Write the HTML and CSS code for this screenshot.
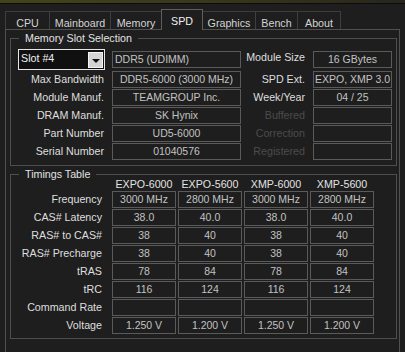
FILE: index.html
```html
<!DOCTYPE html>
<html lang="en">
<head>
    <meta charset="UTF-8">
    <title>CPU-Z SPD</title>
    <link rel="stylesheet" href="styles.css">
</head>
<body>
    <div class="titlebar"></div>
    <div class="tabs">
        <div class="tab">CPU</div>
        <div class="tab">Mainboard</div>
        <div class="tab">Memory</div>
        <div class="tab active">SPD</div>
        <div class="tab">Graphics</div>
        <div class="tab">Bench</div>
        <div class="tab">About</div>
    </div>
    <div class="panel">
        <fieldset class="group slot-group">
            <legend>Memory Slot Selection</legend>
            <div class="slot-grid">
                <div class="slot-select"><span>Slot #4</span><span class="drop-btn"></span></div>
                <div class="box left-text">DDR5 (UDIMM)</div>
                <div class="label right-label">Module Size</div>
                <div class="box">16 GBytes</div>

                <div class="label">Max Bandwidth</div>
                <div class="box">DDR5-6000 (3000 MHz)</div>
                <div class="label right-label">SPD Ext.</div>
                <div class="box">EXPO, XMP 3.0</div>

                <div class="label">Module Manuf.</div>
                <div class="box">TEAMGROUP Inc.</div>
                <div class="label right-label">Week/Year</div>
                <div class="box">04 / 25</div>

                <div class="label">DRAM Manuf.</div>
                <div class="box">SK Hynix</div>
                <div class="label right-label disabled">Buffered</div>
                <div class="box"></div>

                <div class="label">Part Number</div>
                <div class="box">UD5-6000</div>
                <div class="label right-label disabled">Correction</div>
                <div class="box"></div>

                <div class="label">Serial Number</div>
                <div class="box">01040576</div>
                <div class="label right-label disabled">Registered</div>
                <div class="box"></div>
            </div>
        </fieldset>

        <fieldset class="group timings-group">
            <legend>Timings Table</legend>
            <div class="timing-grid">
                <div></div>
                <div class="col-head">EXPO-6000</div>
                <div class="col-head">EXPO-5600</div>
                <div class="col-head">XMP-6000</div>
                <div class="col-head">XMP-5600</div>

                <div class="label">Frequency</div>
                <div class="box">3000 MHz</div>
                <div class="box">2800 MHz</div>
                <div class="box">3000 MHz</div>
                <div class="box">2800 MHz</div>

                <div class="label">CAS# Latency</div>
                <div class="box">38.0</div>
                <div class="box">40.0</div>
                <div class="box">38.0</div>
                <div class="box">40.0</div>

                <div class="label">RAS# to CAS#</div>
                <div class="box">38</div>
                <div class="box">40</div>
                <div class="box">38</div>
                <div class="box">40</div>

                <div class="label">RAS# Precharge</div>
                <div class="box">38</div>
                <div class="box">40</div>
                <div class="box">38</div>
                <div class="box">40</div>

                <div class="label">tRAS</div>
                <div class="box">78</div>
                <div class="box">84</div>
                <div class="box">78</div>
                <div class="box">84</div>

                <div class="label">tRC</div>
                <div class="box">116</div>
                <div class="box">124</div>
                <div class="box">116</div>
                <div class="box">124</div>

                <div class="label">Command Rate</div>
                <div class="box"></div>
                <div class="box"></div>
                <div class="box"></div>
                <div class="box"></div>

                <div class="label">Voltage</div>
                <div class="box">1.250 V</div>
                <div class="box">1.200 V</div>
                <div class="box">1.250 V</div>
                <div class="box">1.200 V</div>
            </div>
        </fieldset>
    </div>
</body>
</html>
```

FILE: styles.css
```css
* {
    box-sizing: border-box;
}
body {
    margin: 0;
    background-color: #1e1e1e;
    color: #dedede;
    font: 10.7px "Liberation Sans", Arial, sans-serif;
    overflow: hidden;
}
.titlebar {
    height: 4px;
    background: linear-gradient(to right, #42451a, #34361a 60%, #26261e);
    border-bottom: 1px solid #0c0c0c;
}
.tabs {
    display: flex;
    align-items: flex-end;
    height: 25px;
    padding-left: 5px;
}
.tab {
    height: 18px;
    padding: 4px 0 0;
    line-height: 14px;
    text-align: center;
    white-space: nowrap;
    color: #d4d4d4;
    border: 1px solid #3e3e3e;
    border-bottom: none;
    margin-right: -1px;
}
.tab:nth-child(1) { width: 45px; }
.tab:nth-child(2) { width: 62px; }
.tab:nth-child(3) { width: 52px; }
.tab:nth-child(4) { width: 42px; }
.tab:nth-child(5) { width: 54px; }
.tab:nth-child(6) { width: 43px; }
.tab:nth-child(7) { width: 44px; }
.tab.active {
    position: relative;
    z-index: 1;
    height: 21px;
    margin-bottom: -1px;
    padding-top: 4px;
    border-color: #5e5e5e;
    background-color: #1e1e1e;
    color: #f0f0f0;
}
.panel {
    margin: 0 5px;
    height: 340px;
    border: 1px solid #505050;
    padding: 0 2px 0 4px;
}
.group {
    margin: 0;
    padding: 0;
    border: 1px solid #4e4e4e;
}
.group legend {
    margin-left: 8px;
    padding: 0 6px;
    line-height: 12px;
    color: #e2e2e2;
}
.slot-group {
    margin-top: 2px;
    padding: 5px 0 5px;
}
.timings-group {
    margin-top: 2px;
    padding-bottom: 4px;
}
.slot-grid {
    display: grid;
    grid-template-columns: 101px 129px 72px 79px;
    grid-template-rows: 21px repeat(5, 17px);
    row-gap: 1px;
}
.timing-grid {
    display: grid;
    grid-template-columns: 99px repeat(4, 64px);
    grid-template-rows: 12px repeat(8, 17px);
    column-gap: 2px;
    row-gap: 1px;
    margin-top: -2px;
}
.label {
    text-align: right;
    padding-right: 8px;
    line-height: 17px;
    white-space: nowrap;
    color: #dedede;
}
.right-label {
    padding-right: 8px;
}
.disabled {
    color: #4c4c4c;
}
.box {
    height: 17px;
    align-self: center;
    border: 1px solid #5a5a5a;
    line-height: 15px;
    font-size: 10.5px;
    text-align: center;
    color: #c2c2c2;
    white-space: nowrap;
    overflow: hidden;
}
.left-text {
    text-align: left;
    padding-left: 2px;
}
.col-head {
    text-align: center;
    line-height: 12px;
    color: #e2e2e2;
}
.slot-select {
    display: flex;
    align-items: center;
    justify-content: space-between;
    width: 87px;
    height: 21px;
    margin-left: 7px;
    border: 1px solid #e6e6e6;
    background-color: #101010;
    color: #f0f0f0;
    padding: 0 1px 0 2px;
}
.slot-select span:first-child {
    margin-top: -3px;
}
.drop-btn {
    position: relative;
    width: 15px;
    height: 16px;
    background-color: #d4d4d4;
    border: 1px solid #f4f4f4;
}
.drop-btn::after {
    content: "";
    position: absolute;
    left: 3px;
    top: 6px;
    border-left: 4px solid transparent;
    border-right: 4px solid transparent;
    border-top: 4px solid #111;
}
```
